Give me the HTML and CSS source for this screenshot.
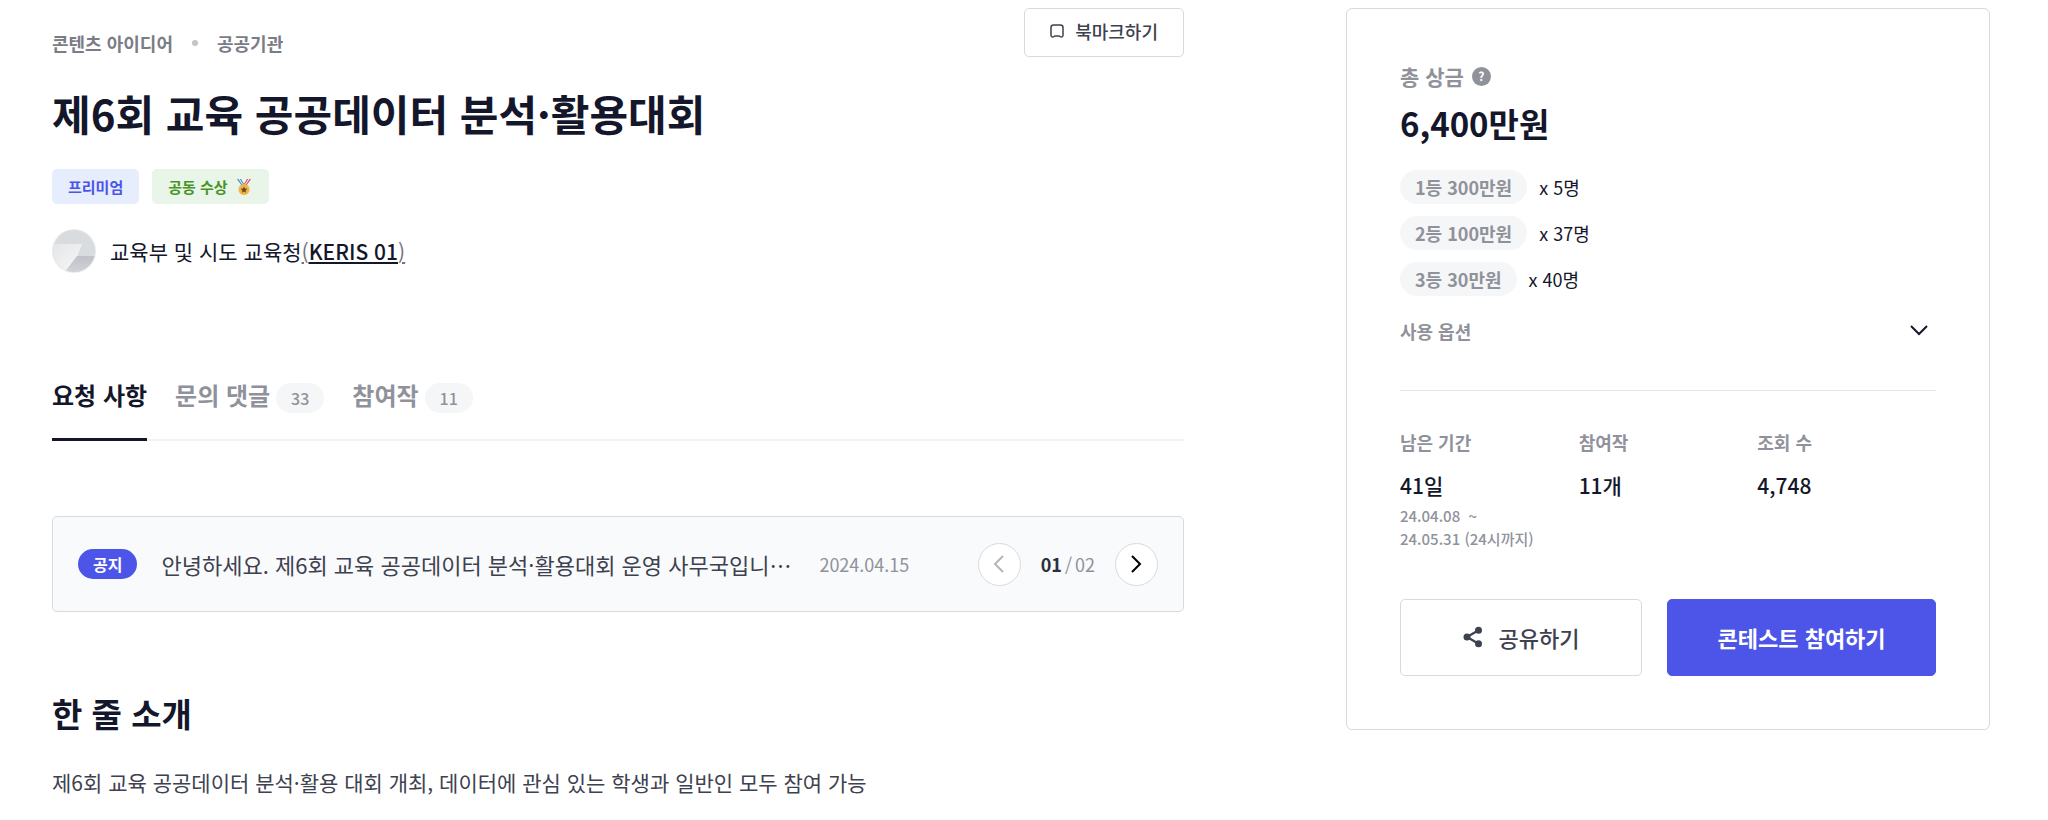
FILE: index.html
```
<!DOCTYPE html>
<html lang="ko">

<head>
    <meta charset="UTF-8">
    <meta name="viewport" content="width=device-width, initial-scale=1.0">
    <title>제6회 교육 공공데이터 분석·활용대회</title>
    <link rel="stylesheet" href="styles.css">
</head>

<body>
    <div class="contest">
        <main class="contest__main">
            <div class="contest__top">
                <div class="category">
                    <span>콘텐츠 아이디어</span>
                    <span class="category__dot"></span>
                    <span>공공기관</span>
                </div>
                <button type="button" class="btn btn--bookmark">
                    <svg width="14" height="14" viewBox="0 0 14 14" fill="none" stroke="currentColor" stroke-width="1.5" stroke-linejoin="round">
                        <path d="M1 3.500Q1 1 3.500 1h7Q13 1 13 3.500v7.800Q13 13 11.400 13q-.9 0-1.400-.5-.5-.6-1.300-.6H5.300q-.8 0-1.300.6-.5.5-1.400.5Q1 13 1 11.300z"></path>
                    </svg>
                    북마크하기
                </button>
            </div>

            <h1 class="contest__title">제6회 교육 공공데이터 분석·활용대회</h1>

            <div class="tags">
                <span class="tag tag--blue">프리미엄</span>
                <span class="tag tag--green">공동 수상
                    <svg width="18" height="16" viewBox="0 0 18 16">
                        <path d="M2 0h4l3 5-2 2z" fill="#3d7fc4"></path>
                        <path d="M3.400 0h1.400l3.200 5-.6.900z" fill="#e9eef5"></path>
                        <path d="M16 0h-4L9 5l2 2z" fill="#d0453c"></path>
                        <path d="M14.600 0h-1.400L10 5l.6.900z" fill="#e9eef5"></path>
                        <circle cx="9" cy="10.500" r="5.500" fill="#efb54c"></circle>
                        <path d="M9 7.400l1 2.100 2.300.3-1.700 1.600.4 2.300-2-1.100-2 1.100.4-2.300-1.700-1.600 2.300-.3z" fill="#6d4a1d"></path>
                    </svg>
                </span>
            </div>

            <div class="host">
                <svg class="host__avatar" width="44" height="44" viewBox="0 0 44 44">
                    <defs>
                        <clipPath id="avatar">
                            <circle cx="22" cy="22" r="21"></circle>
                        </clipPath>
                        <linearGradient id="avatar-light" x1="0" y1="0" x2="1" y2="1">
                            <stop offset="0" stop-color="#e4e5e7"></stop>
                            <stop offset="1" stop-color="#f8f8fa"></stop>
                        </linearGradient>
                        <linearGradient id="avatar-dark" x1="0" y1="0" x2="0" y2="1">
                            <stop offset="0" stop-color="#bfc1c7"></stop>
                            <stop offset="1" stop-color="#d3d4d9"></stop>
                        </linearGradient>
                    </defs>
                    <circle cx="22" cy="22" r="22" fill="#e9eaec"></circle>
                    <g clip-path="url(#avatar)">
                        <path d="M0 0h44v44H0z" fill="#d9dcde"></path>
                        <path d="M0 15h30L19 44H0z" fill="url(#avatar-light)"></path>
                        <path d="M25 27h19v17H12z" fill="url(#avatar-dark)"></path>
                    </g>
                </svg>
                <span>교육부 및 시도 교육청<a href="#" class="host__link">(<span>KERIS 01</span>)</a></span>
            </div>

            <nav class="tabs">
                <a href="#" class="tab tab--active">요청 사항</a>
                <a href="#" class="tab">문의 댓글<span class="tab__count">33</span></a>
                <a href="#" class="tab">참여작<span class="tab__count">11</span></a>
            </nav>

            <div class="notice">
                <span class="notice__label">공지</span>
                <a href="#" class="notice__text">안녕하세요. 제6회 교육 공공데이터 분석·활용대회 운영 사무국입니⋯</a>
                <span class="notice__date">2024.04.15</span>
                <div class="pager">
                    <button type="button" class="pager__btn pager__btn--off" aria-label="이전">
                        <svg width="18" height="18" viewBox="0 0 18 18" fill="none" stroke="currentColor" stroke-width="2">
                            <path d="M13 1L5 9l8 8"></path>
                        </svg>
                    </button>
                    <span class="pager__num"><b>01</b><span>/</span>02</span>
                    <button type="button" class="pager__btn" aria-label="다음">
                        <svg width="18" height="18" viewBox="0 0 18 18" fill="none" stroke="currentColor" stroke-width="2">
                            <path d="M5 1l8 8-8 8"></path>
                        </svg>
                    </button>
                </div>
            </div>

            <h2 class="contest__subtitle">한 줄 소개</h2>
            <p class="contest__text">제6회 교육 공공데이터 분석·활용 대회 개최, 데이터에 관심 있는 학생과 일반인 모두 참여 가능</p>
        </main>

        <aside class="card">
            <div class="prize__label">
                총 상금
                <span class="prize__help">?</span>
            </div>
            <div class="prize__total">6,400만원</div>
            <ul class="prize__list">
                <li><span class="prize__rank">1등 300만원</span>x 5명</li>
                <li><span class="prize__rank">2등 100만원</span>x 37명</li>
                <li><span class="prize__rank">3등 30만원</span>x 40명</li>
            </ul>
            <button type="button" class="options">
                사용 옵션
                <svg width="34" height="18" viewBox="0 0 34 18" fill="none" stroke="#14172b" stroke-width="2">
                    <path d="M9 4l8 8 8-8"></path>
                </svg>
            </button>

            <dl class="stats">
                <div>
                    <dt>남은 기간</dt>
                    <dd>41일</dd>
                    <dd class="stats__dates">24.04.08 &nbsp;~<br>24.05.31 (24시까지)</dd>
                </div>
                <div>
                    <dt>참여작</dt>
                    <dd>11개</dd>
                </div>
                <div>
                    <dt>조회 수</dt>
                    <dd>4,748</dd>
                </div>
            </dl>

            <div class="card__buttons">
                <button type="button" class="btn btn--share">
                    <svg width="20" height="22" viewBox="0 0 20 22" fill="currentColor">
                        <path d="M15.500 4.200L4 11l11.500 6.800" fill="none" stroke="currentColor" stroke-width="2.200"></path>
                        <circle cx="15.500" cy="4.200" r="3.500"></circle>
                        <circle cx="4" cy="11" r="3.500"></circle>
                        <circle cx="15.500" cy="17.800" r="3.500"></circle>
                    </svg>
                    공유하기
                </button>
                <button type="button" class="btn btn--join">콘테스트 참여하기</button>
            </div>
        </aside>
    </div>
</body>

</html>
```
FILE: styles.css
```
* {
    box-sizing: border-box;
}

body {
    margin: 0;
    font-family: "Noto Sans CJK KR", sans-serif;
    color: #14172b;
    background: #fff;
}

h1,
h2,
p,
ul,
dl,
dd {
    margin: 0;
    padding: 0;
}

a {
    color: inherit;
    text-decoration: none;
}

button {
    font-family: inherit;
    cursor: pointer;
}

.contest {
    display: grid;
    grid-template-columns: 58fr 33fr;
    gap: 162px;
    align-items: start;
    padding: 8px 58px 16px 52px;
}

.contest__main {
    min-width: 0;
}

.contest__top {
    display: flex;
    justify-content: space-between;
    align-items: flex-start;
}

/* категории */
.category {
    display: flex;
    align-items: center;
    margin-top: 22px;
    font-size: 18px;
    line-height: 26px;
    font-weight: 700;
    color: #7b7d86;
}

.category__dot {
    width: 6px;
    height: 6px;
    margin: 0 19px;
    border-radius: 50%;
    background: #c2c4cb;
}

/* кнопки */
.btn {
    display: flex;
    align-items: center;
    justify-content: center;
    border: 1px solid #d9dadd;
    border-radius: 5px;
    background: #fff;
    color: #3e414f;
    font-weight: 500;
}

.btn--bookmark {
    gap: 11px;
    height: 49px;
    padding: 0 25px 3px;
    font-size: 18px;
}

.contest__title {
    margin-top: 26px;
    font-size: 42px;
    line-height: 60px;
    font-weight: 700;
}

/* метки */
.tags {
    display: flex;
    gap: 13px;
    margin-top: 26px;
}

.tag {
    display: flex;
    align-items: center;
    gap: 7px;
    height: 35px;
    padding: 0 16px;
    border-radius: 5px;
    font-size: 15px;
    font-weight: 700;
}

.tag--blue {
    background: #e6edfd;
    color: #4c55e8;
}

.tag--green {
    background: #e8f5e8;
    color: #479425;
}

.host {
    display: flex;
    align-items: center;
    gap: 14px;
    margin-top: 25px;
    font-size: 21px;
    line-height: 44px;
}

.host__link {
    color: #73757e;
    text-decoration: underline;
}

.host__link span {
    font-weight: 500;
    color: #14172b;
    text-decoration: underline;
}

/* вкладки */
.tabs {
    display: flex;
    gap: 28px;
    margin-top: 104px;
    box-shadow: inset 0 -2px #f1f2f3;
}

.tab {
    display: flex;
    align-items: center;
    gap: 6px;
    padding-bottom: 25px;
    border-bottom: 3px solid transparent;
    font-size: 24px;
    line-height: 36px;
    font-weight: 700;
    color: #90929b;
}

.tab--active {
    border-bottom-color: #14172b;
    color: #14172b;
}

.tab__count {
    padding: 0 15px;
    margin-top: 5px;
    border-radius: 15px;
    background: #f5f6f7;
    font-size: 16px;
    line-height: 30px;
    font-weight: 500;
}

/* объявление */
.notice {
    display: flex;
    align-items: center;
    height: 96px;
    margin-top: 75px;
    padding: 0 25px;
    border: 1px solid #d9dadd;
    border-radius: 5px;
    background: #f9fafc;
}

.notice__label {
    flex-shrink: 0;
    padding: 0 15px;
    border-radius: 15px;
    background: #4c55e8;
    color: #fff;
    font-size: 16px;
    line-height: 30px;
    font-weight: 700;
}

.notice__text {
    margin-left: 24px;
    overflow: hidden;
    white-space: nowrap;
    text-overflow: ellipsis;
    font-size: 22px;
    line-height: 36px;
    color: #3e414f;
}

.notice__date {
    margin-left: 28px;
    font-size: 18px;
    color: #90929b;
}

.pager {
    display: flex;
    align-items: center;
    gap: 20px;
    margin-left: auto;
}

.pager__btn {
    display: flex;
    align-items: center;
    justify-content: center;
    width: 43px;
    height: 43px;
    padding: 0;
    border: 1px solid #d9dadd;
    border-radius: 50%;
    background: #fff;
    color: #000;
}

.pager__btn--off {
    color: #b4b5ba;
}

.pager__num {
    font-size: 18px;
    color: #90929b;
}

.pager__num b {
    font-weight: 700;
    color: #2c2f3e;
}

.pager__num span {
    margin: 0 3px;
}

.contest__subtitle {
    margin-top: 77px;
    font-size: 33px;
    line-height: 48px;
}

.contest__text {
    margin-top: 29px;
    font-size: 21px;
    line-height: 32px;
    color: #3e414f;
}

/* карточка конкурса */
.card {
    padding: 52px 53px 53px;
    border: 1px solid #d9dadd;
    border-radius: 6px;
}

.prize__label {
    display: flex;
    align-items: center;
    gap: 8px;
    font-size: 21px;
    line-height: 30px;
    font-weight: 700;
    color: #90929b;
}

.prize__help {
    width: 19px;
    height: 19px;
    border-radius: 50%;
    background: #90929b;
    color: #fff;
    font-size: 12px;
    line-height: 18px;
    font-weight: 700;
    text-align: center;
}

.prize__total {
    margin-top: 8px;
    font-size: 33px;
    line-height: 48px;
    font-weight: 700;
}

.prize__list {
    display: flex;
    flex-direction: column;
    gap: 12px;
    margin-top: 23px;
    list-style: none;
}

.prize__list li {
    display: flex;
    align-items: center;
    gap: 12px;
    font-size: 18px;
    line-height: 34px;
}

.prize__rank {
    padding: 0 15px;
    border-radius: 17px;
    background: #f5f6f7;
    font-weight: 700;
    color: #90929b;
}

.options {
    display: flex;
    justify-content: space-between;
    align-items: center;
    width: 100%;
    margin-top: 22px;
    padding: 0 0 46px;
    border: 0;
    border-bottom: 1px solid #e4e5e7;
    background: none;
    font-size: 18px;
    line-height: 26px;
    font-weight: 700;
    color: #90929b;
}

.stats {
    display: grid;
    grid-template-columns: repeat(3, 1fr);
    margin-top: 38px;
}

.stats dt {
    font-size: 18px;
    line-height: 26px;
    font-weight: 700;
    color: #90929b;
}

.stats dd {
    margin-top: 14px;
    font-size: 21px;
    line-height: 32px;
    font-weight: 500;
}

.stats .stats__dates {
    margin-top: 3px;
    font-size: 15px;
    line-height: 23px;
    color: #90929b;
    white-space: nowrap;
}

.card__buttons {
    display: flex;
    gap: 25px;
    margin-top: 49px;
}

.card__buttons .btn {
    height: 77px;
    padding: 0 0 2px;
    font-size: 22px;
}

.card__buttons .btn--share {
    flex: 9;
    gap: 16px;
}

.card__buttons .btn--join {
    flex: 10;
    border-color: #4c55e8;
    background: #4c55e8;
    color: #fff;
    font-weight: 700;
}
```
